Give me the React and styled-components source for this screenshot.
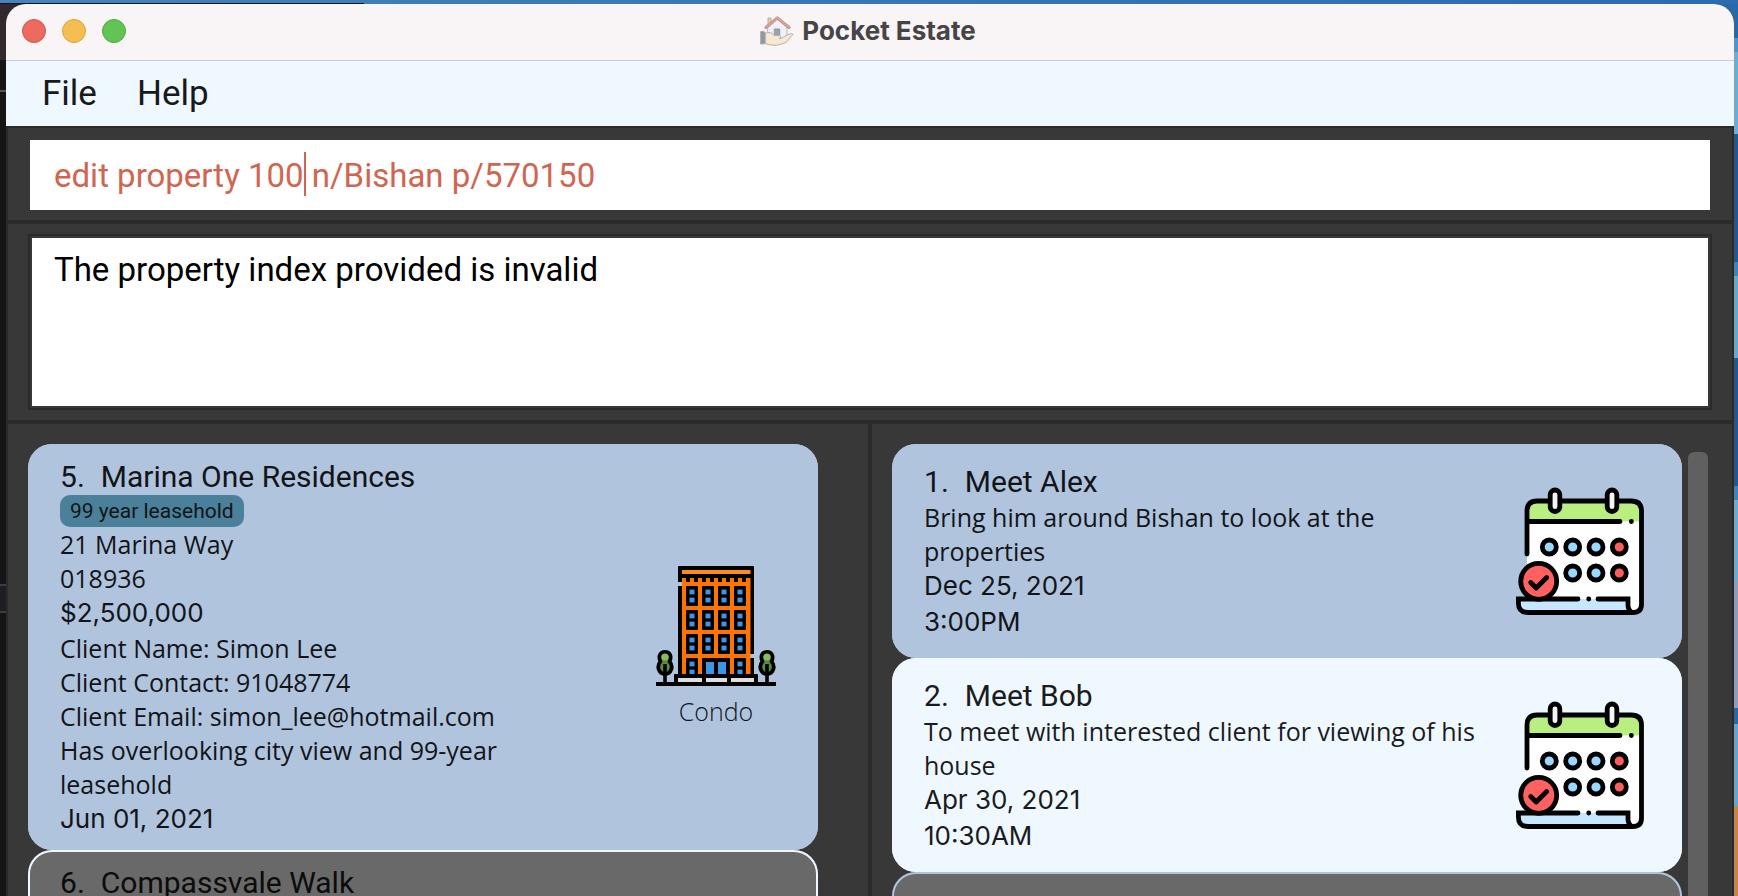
import React, { useLayoutEffect, useRef, useState } from 'react';
import styled, { createGlobalStyle } from 'styled-components';

const UI = 'Inter, "Liberation Sans", sans-serif';
const DISPLAY = 'Roboto, "Liberation Sans", sans-serif';
const BODY = '"Open Sans", "Noto Sans", sans-serif';

const GlobalStyle = createGlobalStyle`
  *, *::before, *::after { box-sizing: border-box; }
  body { margin: 0; overflow: hidden; }
  h1, h2, p, ul { margin: 0; padding: 0; }
`;

const Desktop = styled.div`
  height: 100vh;
  padding: 4px 4px 0 6px;
  background:
    linear-gradient(90deg, #0e1a2c 0 364px, transparent 364px) 0 3px / 100% 1px no-repeat,
    linear-gradient(90deg, #4a82b8, #3a7cb4 30%, #2a6cb0) 0 0 / 100% 4px no-repeat,
    linear-gradient(180deg, #33282c 0 60px, #151515 60px 90px, #555 90px 92px, #151515 92px 584px,
      #3a3d44 584px 586px, #1c1e24 586px 611px, #3a3d44 611px 613px, #151515 613px) 0 0 / 20px 100% no-repeat,
    linear-gradient(180deg, #2868a4 0 38px, #4f95c6 38px 52px, #6dadd4 52px 134px, #22588c 134px 262px,
      #3f83b8 262px 276px, #6aa6cc 276px 358px, #22588c 358px 486px, #3f83b8 486px 500px, #6fa9cc 500px 582px,
      #8f9cbc 582px 708px, #2868a4 708px 724px, #6aa3c9 724px 806px, #c3864a 806px) 100% 0 / 20px 100% no-repeat,
    #383838;
`;

const AppWindow = styled.div`
  display: flex;
  flex-direction: column;
  height: 100%;
  overflow: hidden;
  border-radius: 20px 20px 0 0;
  background: #383838;
`;

const TitleBar = styled.header`
  display: grid;
  grid-template-columns: 1fr auto 1fr;
  align-items: center;
  height: 57px;
  flex: none;
  padding: 0 20px 2px 16px;
  background: #f9f5f6;
  border-bottom: 1px solid #c8ced8;
`;

const Lights = styled.div`
  display: flex;
  gap: 16px;
`;

const Light = styled.button`
  width: 24px;
  height: 24px;
  padding: 0;
  border: 1px solid ${(p) => p.$edge};
  border-radius: 50%;
  background: ${(p) => p.$fill};
`;

const Title = styled.h1`
  display: flex;
  align-items: center;
  gap: 8px;
  font: 700 26px/32px ${UI};
  color: #464446;
`;

const MenuBar = styled.nav`
  display: flex;
  flex: none;
  height: 65px;
  padding: 0 16px;
  background: #f0f8ff;
`;

const MenuButton = styled.button`
  padding: 0 20px;
  border: 0;
  background: none;
  font: 400 35px/40px ${DISPLAY};
  color: #17191b;
`;

const Content = styled.main`
  display: flex;
  flex-direction: column;
  flex: 1;
  min-height: 0;
  border: 2px solid #2a2a2a;
  border-bottom: 0;
`;

const CommandSection = styled.section`
  flex: none;
  padding: 12px 22px 10px;
`;

const CommandBox = styled.div`
  position: relative;
`;

const CommandInput = styled.input`
  display: block;
  width: 100%;
  height: 70px;
  padding: 0 24px;
  border: 0;
  border-radius: 0;
  outline: 0;
  background: #fff;
  color: #d06651;
  caret-color: transparent;
  font: 400 33px/40px ${DISPLAY};
`;

const Caret = styled.span`
  position: absolute;
  top: 12px;
  width: 2px;
  height: 44px;
  background: #d06651;
`;

const ResultSection = styled.section`
  flex: none;
  padding: 10px 20px;
  border-top: 4px solid #2a2a2a;
  border-bottom: 4px solid #2a2a2a;
`;

const ResultFrame = styled.div`
  padding: 2px;
  border: 2px solid #2a2a2a;
`;

const ResultText = styled.textarea`
  display: block;
  width: 100%;
  height: 168px;
  padding: 12px 22px;
  border: 0;
  outline: 0;
  resize: none;
  background: #fff;
  color: #000;
  font: 400 33px/40px ${DISPLAY};
`;

const Panes = styled.div`
  display: flex;
  flex: 1;
  min-height: 0;
`;

const Pane = styled.section`
  display: flex;
  flex: 1;
  gap: 6px;
  min-width: 0;
  padding: 20px 24px 0 20px;
  overflow: hidden;

  & + & { border-left: 4px solid #2a2a2a; flex-basis: 4px; }
`;

const List = styled.ul`
  flex: 1;
  min-width: 0;
  list-style: none;
`;

const ScrollTrack = styled.div`
  width: 20px;
  flex: none;
  padding-top: 8px;
`;

const ScrollThumb = styled.div`
  height: 100%;
  border-radius: 6px 6px 0 0;
  background: #606060;
`;

const TONES = {
  steel: { fill: '#b0c4de', edge: '#b0c4de', ink: '#121418' },
  alice: { fill: '#f0f8ff', edge: '#f0f8ff', ink: '#191b1d' },
  dimAlice: { fill: '#696969', edge: '#f0f8ff', ink: '#0c0c0c' },
  dimSteel: { fill: '#696969', edge: '#b0c4de', ink: '#0c0c0c' },
};

const Card = styled.li`
  display: flex;
  align-items: center;
  gap: ${(p) => (p.$kind === 'property' ? '60px' : '36px')};
  min-height: ${(p) => (p.$kind === 'property' ? '226px' : '214px')};
  padding: 0 38px 0 32px;
  border-radius: 24px;
  background: ${(p) => TONES[p.$tone].fill};
  box-shadow: inset 0 0 0 2px ${(p) => TONES[p.$tone].edge};
  color: ${(p) => TONES[p.$tone].ink};
`;

const Details = styled.div`
  flex: 1;
  min-width: 0;
  align-self: flex-start;
  padding: ${(p) => (p.$kind === 'property' ? '15px 0 13px' : '20px 0 18px')};
`;

const Heading = styled.h2`
  display: flex;
  gap: 16px;
  font: 400 30px/36px ${DISPLAY};
`;

const Tag = styled.span`
  display: block;
  width: fit-content;
  padding: 0 10px;
  border-radius: 10px;
  background: #4a8099;
  font: 400 21px/32px ${DISPLAY};
`;

const Line = styled.p`
  font: 400 25px/34px ${BODY};
`;

const Figure = styled.p`
  font: 400 26px/36px ${UI};
`;

const Media = styled.div`
  display: flex;
  flex-direction: column;
  align-items: center;
  gap: 8px;
  width: 128px;
  flex: none;
`;

const MediaLabel = styled.span`
  font: 300 25px/34px ${BODY};
`;

function LogoIcon() {
  return (
    <svg width="34" height="31" viewBox="0 0 34 31" opacity="0.85" aria-hidden="true">
      <g strokeLinejoin="round" strokeLinecap="round">
        <path d="M8 8V2h3v4" fill="#e8c79a" stroke="#a8a2a2" strokeWidth="1" />
        <path d="M8 11 17.3 3 27 11v12H8z" fill="#eef1f9" stroke="#adb0b8" strokeWidth="1" />
        <path d="M6 11.5 17.3 1.8 29 11.5" fill="none" stroke="#a88484" strokeWidth="3" />
        <path d="M6 11.5 17.3 1.8 29 11.5" fill="none" stroke="#e58f8c" strokeWidth="1.6" />
        <path d="M14.7 13h5v9h-5z" fill="#8f959f" stroke="#7d838c" strokeWidth="1" />
        <path d="M5 17.500c4-2 7-1 9 2h5c2 0 2 3 0 3 4 0 6-3 9-4s5-1 5 0c-4 3-5 8-10 9-6 2.500-12 2-18 0z" fill="#fae5cf" stroke="#a9a29c" strokeWidth="1" />
        <path d="M1 15.5h2.500c1 0 1.700 1 1.700 2V26c0 1-.7 2-1.700 2H1z" fill="#7f8790" stroke="#989da3" strokeWidth="1" />
      </g>
    </svg>
  );
}

function CalendarIcon() {
  const dots = [
    [33.3, 60, 0], [56.7, 60, 0], [80, 60, 0], [103.3, 60, 1],
    [56.7, 86, 0], [80, 86, 0], [103.3, 86, 1],
  ];
  return (
    <svg width="128" height="128" viewBox="0 0 128 128" aria-hidden="true">
      <path d="M11 24q0-10 10-10h95q10 0 10 10v94q0 8-8 8H20L11 106z" fill="#fff" />
      <path d="M11 34.500V24q0-10 10-10h94q10.500 0 10.500 10v10.500z" fill="#b9ef80" />
      <path d="M2.200 112H112v8q1 4 5 5.800H12q-9.800 0-9.800-9.800z" fill="#c5e7ff" />
      <g fill="none" stroke="#000" strokeWidth="4.800" strokeLinecap="round">
        <path d="M11 67V24q0-10 10-10h94q10.500 0 10.500 10v93q0 8.500-8.500 8.500H12q-9.600 0-9.600-9.500v-4H62M82 112h30v6q0 5 4 7.500" />
        <path d="M13 34.500h91M115.300 34.500h.1M72.700 112h.1" />
      </g>
      {[39, 96].map((x) => (
        <rect key={x} x={x - 4.8} y="3" width="9.600" height="21.500" rx="4.800" fill="#f4f4f4" stroke="#000" strokeWidth="4.800" />
      ))}
      {dots.map(([x, y, red]) => (
        <circle key={`${x}-${y}`} cx={x} cy={y} r="7" fill={red ? '#ff5d5d' : '#9bd7ff'} stroke="#000" strokeWidth="4.800" />
      ))}
      <circle cx="22.700" cy="94.300" r="18" fill="#ff6060" stroke="#000" strokeWidth="4.800" />
      <path d="m14.700 95.500 5.500 5.500 10.500-10.500" fill="none" stroke="#000" strokeWidth="4.800" strokeLinecap="round" strokeLinejoin="round" />
    </svg>
  );
}

function Tree({ x }) {
  return (
    <g transform={`translate(${x} 0)`}>
      <path d="M-4.500 95.500c-2.500-5-.5-9.500 4.500-9.500s7 4.500 4.500 9.500c4.500 5 1.500 12.500-4.500 12.500s-9-7.500-4.500-12.500z" fill="#5c8a3e" stroke="#000" strokeWidth="3.800" strokeLinejoin="round" />
      <circle cx="0" cy="91" r="3.600" fill="#86bd5a" />
      <path d="M0 98v19" stroke="#000" strokeWidth="3.600" />
    </g>
  );
}

function CondoIcon() {
  const columns = [30, 46, 62, 78];
  const rows = [20, 44, 68, 92];
  return (
    <svg width="120" height="120" viewBox="0 0 120 120" aria-hidden="true">
      <path d="M23 0h74q1 0 1 1v87h-4v4h4v17H22V20h4v-4h-4V1q0-1 1-1z" fill="#000" />
      <path d="M26 12h68.500v97H26z" fill="#ff7300" />
      <path d="M26 4h68.500v4H26z" fill="#ff8a22" />
      {[...Array(8)].map((_, i) => (
        <rect key={i} x={30 + i * 8} y="11" width="4" height="5" fill="#000" />
      ))}
      {rows.map((y, r) =>
        columns.map((x, c) =>
          r === 3 && (c === 1 || c === 2) ? null : (
            <g key={`${x}-${y}`}>
              <rect x={x} y={y} width="12" height={r === 3 ? 17 : 20} rx="1" fill="#000" />
              <rect x={x + 3.500} y={y + 3.600} width="5" height="4.800" fill="#3b97e3" />
              <rect x={x + 3.500} y={y + 11.600} width="5" height="4.800" fill="#3b97e3" />
            </g>
          ),
        ),
      )}
      <rect x="46" y="92" width="28" height="17" rx="1" fill="#000" />
      <path d="M50 96h8v13h-8zM62 96h8v13h-8z" fill="#3b97e3" />
      <path d="M18 109q0-1 1-1h82q1 0 1 1v8H18zM0 116h120v4H0z" fill="#000" />
      <path d="M22 112h24v4H22zM50 112h21v4H50zM75 112h23v4H75z" fill="#dedede" />
      <Tree x={9} />
      <Tree x={111} />
    </svg>
  );
}

function FlatIcon() {
  return (
    <svg width="120" height="120" viewBox="0 0 120 120" aria-hidden="true">
      <rect x="30" y="0" width="60" height="11" rx="2.500" fill="#000" />
      <rect x="33" y="4" width="54" height="3" fill="#cc7414" />
      <path d="M33 9h54v111H33z" fill="#000" />
      <path d="M36 10h48v110H36z" fill="#efa41f" />
      <path d="M74 10h10v110H74z" fill="#ee7f20" />
      {[40, 55, 70].map((x) => (
        <rect key={x} x={x} y="12.500" width="10" height="16" rx="2" fill="#000" />
      ))}
    </svg>
  );
}

const COMMAND = 'edit property 100 n/Bishan p/570150';
const CARET_INDEX = 17;

function CommandField() {
  const input = useRef(null);
  const [caretLeft, setCaretLeft] = useState(0);

  useLayoutEffect(() => {
    const style = getComputedStyle(input.current);
    const ctx = document.createElement('canvas').getContext('2d');
    ctx.font = `${style.fontWeight} ${style.fontSize} ${style.fontFamily}`;
    const width = ctx.measureText(COMMAND.slice(0, CARET_INDEX)).width;
    setCaretLeft(Math.round(parseFloat(style.paddingLeft) + width));
  }, []);

  return (
    <CommandBox>
      <CommandInput ref={input} aria-label="Command" defaultValue={COMMAND} spellCheck={false} />
      <Caret style={{ left: caretLeft }} />
    </CommandBox>
  );
}

function CardHeading({ index, children }) {
  return (
    <Heading>
      <span>{index}.</span>
      <span>{children}</span>
    </Heading>
  );
}

function EventCard({ tone, index, name, note, date, time }) {
  return (
    <Card $kind="event" $tone={tone}>
      <Details $kind="event">
        <CardHeading index={index}>{name}</CardHeading>
        <Line>{note}</Line>
        <Figure>{date}</Figure>
        <Figure>{time}</Figure>
      </Details>
      <Media>
        <CalendarIcon />
      </Media>
    </Card>
  );
}

export default function App() {
  return (
    <>
      <GlobalStyle />
      <Desktop>
        <AppWindow>
          <TitleBar>
            <Lights>
              <Light aria-label="Close" $fill="#ec6a5e" $edge="#d5554a" />
              <Light aria-label="Minimize" $fill="#f4be50" $edge="#d9a33c" />
              <Light aria-label="Zoom" $fill="#61c454" $edge="#4fa942" />
            </Lights>
            <Title>
              <LogoIcon />
              Pocket Estate
            </Title>
          </TitleBar>
          <MenuBar>
            <MenuButton>File</MenuButton>
            <MenuButton>Help</MenuButton>
          </MenuBar>
          <Content>
            <CommandSection>
              <CommandField />
            </CommandSection>
            <ResultSection>
              <ResultFrame>
                <ResultText aria-label="Result" readOnly value="The property index provided is invalid" />
              </ResultFrame>
            </ResultSection>
            <Panes>
              <Pane>
                <List>
                  <Card $kind="property" $tone="steel">
                    <Details $kind="property">
                      <CardHeading index={5}>Marina One Residences</CardHeading>
                      <Tag>99 year leasehold</Tag>
                      <Line>21 Marina Way</Line>
                      <Line>018936</Line>
                      <Figure>$2,500,000</Figure>
                      <Line>Client Name: Simon Lee</Line>
                      <Line>Client Contact: 91048774</Line>
                      <Line>Client Email: simon_lee@hotmail.com</Line>
                      <Line>Has overlooking city view and 99-year leasehold</Line>
                      <Figure>Jun 01, 2021</Figure>
                    </Details>
                    <Media>
                      <CondoIcon />
                      <MediaLabel>Condo</MediaLabel>
                    </Media>
                  </Card>
                  <Card $kind="property" $tone="dimAlice">
                    <Details $kind="property">
                      <CardHeading index={6}>Compassvale Walk</CardHeading>
                    </Details>
                    <Media>
                      <FlatIcon />
                      <MediaLabel />
                    </Media>
                  </Card>
                </List>
                <ScrollTrack />
              </Pane>
              <Pane>
                <List>
                  <EventCard
                    tone="steel"
                    index={1}
                    name="Meet Alex"
                    note="Bring him around Bishan to look at the properties"
                    date="Dec 25, 2021"
                    time="3:00PM"
                  />
                  <EventCard
                    tone="alice"
                    index={2}
                    name="Meet Bob"
                    note="To meet with interested client for viewing of his house"
                    date="Apr 30, 2021"
                    time="10:30AM"
                  />
                  <Card $kind="event" $tone="dimSteel" />
                </List>
                <ScrollTrack>
                  <ScrollThumb />
                </ScrollTrack>
              </Pane>
            </Panes>
          </Content>
        </AppWindow>
      </Desktop>
    </>
  );
}
